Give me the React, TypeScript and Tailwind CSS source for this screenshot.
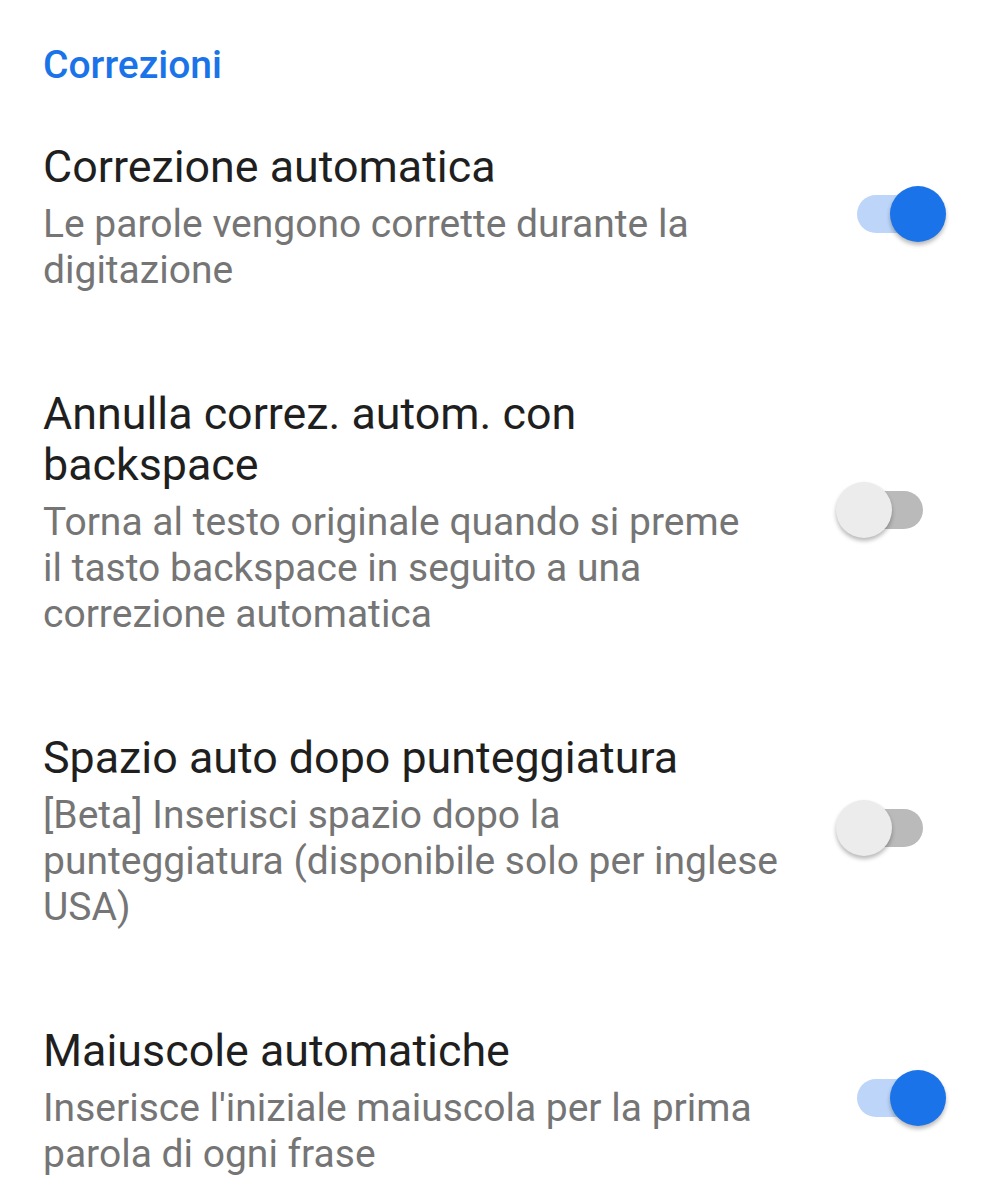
import React from "react";

type Item = {
  title: React.ReactNode;
  summary: React.ReactNode;
  on: boolean;
};

const items: Item[] = [
  {
    title: "Correzione automatica",
    summary: (
      <>
        Le parole vengono corrette durante la
        <br />
        digitazione
      </>
    ),
    on: true,
  },
  {
    title: (
      <>
        Annulla correz. autom. con
        <br />
        backspace
      </>
    ),
    summary: (
      <>
        Torna al testo originale quando si preme
        <br />
        il tasto backspace in seguito a una
        <br />
        correzione automatica
      </>
    ),
    on: false,
  },
  {
    title: "Spazio auto dopo punteggiatura",
    summary: (
      <>
        [Beta] Inserisci spazio dopo la
        <br />
        punteggiatura (disponibile solo per inglese
        <br />
        USA)
      </>
    ),
    on: false,
  },
  {
    title: "Maiuscole automatiche",
    summary: (
      <>
        Inserisce l'iniziale maiuscola per la prima
        <br />
        parola di ogni frase
      </>
    ),
    on: true,
  },
];

function Toggle({ on }: { on: boolean }) {
  return (
    <div className="relative w-[110px] h-[56px] shrink-0 mb-[6px]">
      <div
        className={
          on
            ? "absolute left-[21px] top-[9px] w-[66px] h-[38px] rounded-full bg-[#bdd5f8]"
            : "absolute left-[21px] top-[9px] w-[66px] h-[38px] rounded-full bg-[#bababa]"
        }
      />
      <div
        className={
          on
            ? "absolute left-[54px] top-0 w-[56px] h-[56px] rounded-full bg-[#1a73e8] shadow-[0_3px_4px_rgba(0,0,0,0.28)]"
            : "absolute left-0 top-0 w-[56px] h-[56px] rounded-full bg-[#ececec] shadow-[0_3px_4px_rgba(0,0,0,0.28)]"
        }
      />
    </div>
  );
}

export default function App() {
  return (
    <div
      className="w-[1000px] h-[1187px] bg-white overflow-hidden pl-[43px] pr-[54px] pt-[42px]"
      style={{ fontFamily: "Roboto, 'Noto Sans', sans-serif" }}
    >
      <div className="text-[39px] leading-[46px] font-medium text-[#1a73e8]">
        Correzioni
      </div>
      <div className="mt-[53px] flex flex-col gap-[95px]">
        {items.map((it, i) => (
          <div key={i} className="flex items-center gap-[24px]">
            <div className="flex-1 min-w-0">
              <div className="text-[44.8px] leading-[51px] text-[#1f1f1f]">
                {it.title}
              </div>
              <div className="mt-[9px] text-[39px] leading-[46px] text-[#757575] whitespace-nowrap">
                {it.summary}
              </div>
            </div>
            <Toggle on={it.on} />
          </div>
        ))}
      </div>
    </div>
  );
}
